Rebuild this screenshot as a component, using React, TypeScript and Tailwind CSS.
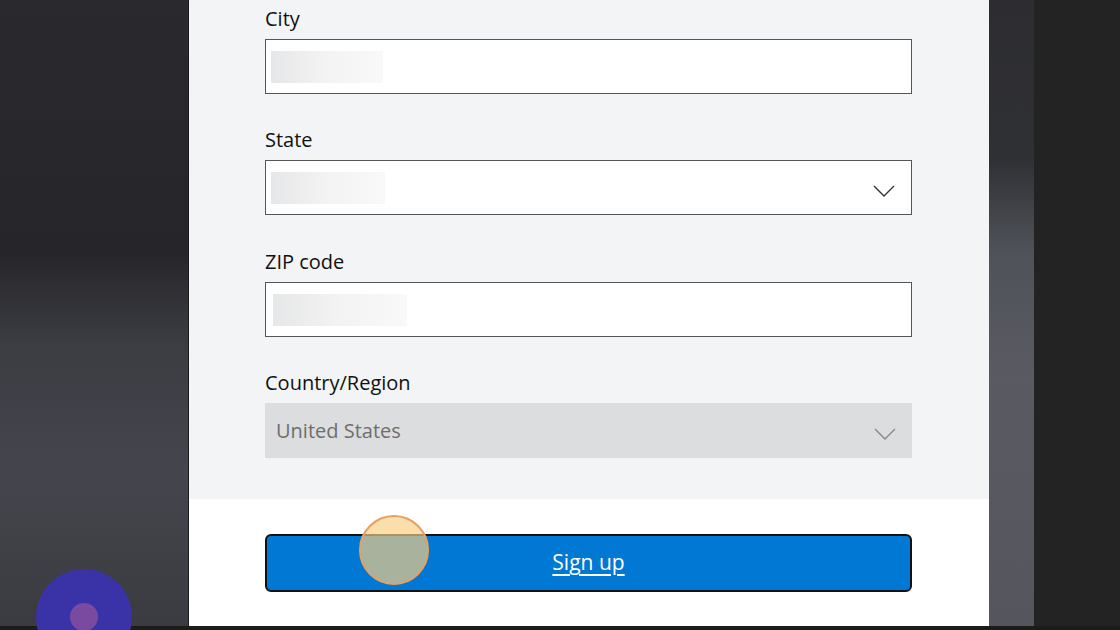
import React from "react";

const Blur = ({ w }: { w: number }) => (
  <div
    className="h-[32px] bg-gradient-to-r from-[#e6e7e8] via-[#f3f3f3] to-[#f9f9f9]"
    style={{ width: w }}
  />
);

const Chevron = ({ color }: { color: string }) => (
  <svg width="22" height="14" viewBox="0 0 22 14" fill="none" className="mt-[7px]">
    <path d="M1 2 L11 12 L21 2" stroke={color} strokeWidth="1.4" />
  </svg>
);

const Label = ({ children, className }: { children: React.ReactNode; className: string }) => (
  <div className={`${className} text-[20px] font-medium leading-[28px] text-[#111]`}>{children}</div>
);

export default function App() {
  return (
    <div
      className="relative flex h-[630px] w-[1120px] overflow-hidden bg-[#232323]"
      style={{ fontFamily: '"Open Sans", "Noto Sans", sans-serif' }}
    >
      <div className="h-full w-[188px] bg-[linear-gradient(180deg,#2a2a2e_0%,#26262a_40%,#3c3d43_55%,#45464d_75%,#3a3b40_100%)]" />
      <div className="flex h-[626px] w-[801px] flex-col border-l border-[#1a1a1a]">
        <div className="flex flex-1 flex-col bg-[#f3f4f6] pl-[76px] pr-[77px] pt-[5px]">
          <Label className="">City</Label>
          <div className="mt-[6px] flex h-[55px] items-center border border-[#555] bg-white pl-[5px]">
            <Blur w={112} />
          </div>
          <Label className="mt-[32px]">State</Label>
          <div className="mt-[6px] flex h-[55px] items-center justify-between border border-[#555] bg-white pl-[5px] pr-[16px]">
            <Blur w={114} />
            <Chevron color="#333" />
          </div>
          <Label className="mt-[33px]">ZIP code</Label>
          <div className="mt-[6px] flex h-[55px] items-center border border-[#555] bg-white pl-[7px]">
            <Blur w={134} />
          </div>
          <Label className="mt-[32px]">Country/Region</Label>
          <div className="mt-[6px] flex h-[55px] items-center justify-between bg-[#dcdddf] pl-[11px] pr-[16px]">
            <span className="text-[20px] text-[#6e6e6e]">United States</span>
            <Chevron color="#888" />
          </div>
        </div>
        <div className="flex h-[127px] flex-col bg-white pl-[76px] pr-[77px] pt-[35px]">
          <div className="flex h-[58px] items-center justify-center rounded-[6px] border-2 border-[#111] bg-[#0078d4]">
            <span className="text-[21px] text-white underline underline-offset-4">Sign up</span>
          </div>
        </div>
      </div>
      <div className="h-full w-[45px] bg-[linear-gradient(180deg,#2d2d31_0%,#2f3034_25%,#50525a_40%,#595a62_60%,#55565d_100%)]" />
      <div className="h-full flex-1 bg-[#232323]" />
      <div className="absolute bottom-0 left-0 h-[4px] w-full bg-[#1c1c1c]" />
      <div className="absolute left-[359px] top-[515px] h-[70px] w-[70px] rounded-full border-2 border-[#e8a060] bg-[rgba(248,207,131,0.68)]" />
      <div className="absolute left-[36px] top-[569px] flex h-[96px] w-[96px] items-center justify-center rounded-full bg-[#3a33a8]">
        <div className="h-[28px] w-[28px] rounded-full bg-[#7a4aa0]" />
      </div>
    </div>
  );
}
